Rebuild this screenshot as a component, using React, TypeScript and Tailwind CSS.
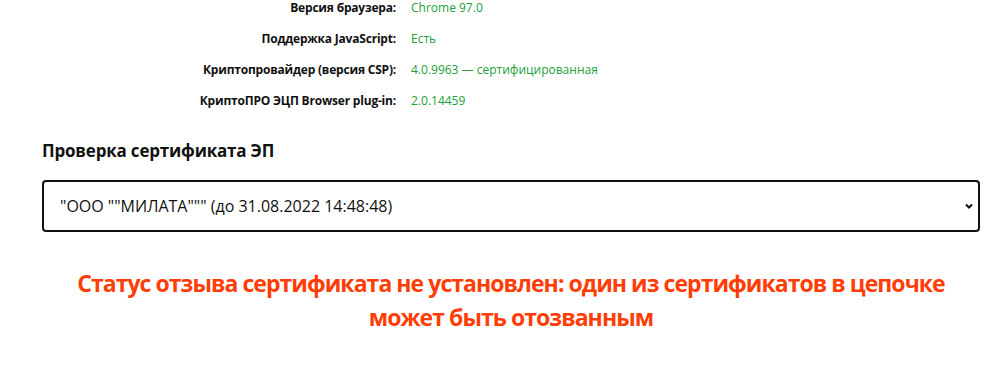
const info = [
  { label: "Версия браузера:", value: "Chrome 97.0" },
  { label: "Поддержка JavaScript:", value: "Есть" },
  { label: "Криптопровайдер (версия CSP):", value: "4.0.9963 — сертифицированная" },
  { label: "КриптоПРО ЭЦП Browser plug-in:", value: "2.0.14459" },
];

export default function App() {
  return (
    <div
      className="h-[370px] w-[994px] overflow-hidden bg-white"
      style={{ fontFamily: '"Open Sans", "Noto Sans", sans-serif' }}
    >
      <div className="mx-[42px] -mt-[8px] w-[938px]">
        <div className="grid grid-cols-[354px_1fr] gap-x-[15px]">
          {info.map((row) => (
            <div key={row.label} className="contents">
              <div className="flex h-[31px] items-center justify-end text-[12px] font-bold tracking-[-0.2px] text-[#111]">
                {row.label}
              </div>
              <div className="flex h-[31px] items-center text-[12px] text-[#22a03a]">{row.value}</div>
            </div>
          ))}
        </div>

        <h2 className="mt-[23px] text-[17px] font-bold leading-[24px] tracking-[-0.2px] text-[#111]">
          Проверка сертификата ЭП
        </h2>

        <div className="relative mt-[17px]">
          <select className="h-[52px] w-full appearance-none rounded-[4px] border-2 border-[#111] bg-white pl-[16px] text-[16px] text-[#111] outline-none">
            <option>"ООО ""МИЛАТА""" (до 31.08.2022 14:48:48)</option>
          </select>
          <svg
            className="pointer-events-none absolute right-[6px] top-[21px] h-[10px] w-[10px]"
            viewBox="0 0 10 10"
            fill="none"
            stroke="#111"
            strokeWidth="2"
          >
            <path d="M2 3.5l3 3 3-3" />
          </svg>
        </div>

        <p className="mt-[34px] text-center text-[23px] font-bold leading-[34px] tracking-[-0.95px] text-[#ff3d06]">
          Статус отзыва сертификата не установлен: один из сертификатов в цепочке может быть отозванным
        </p>
      </div>
    </div>
  );
}
